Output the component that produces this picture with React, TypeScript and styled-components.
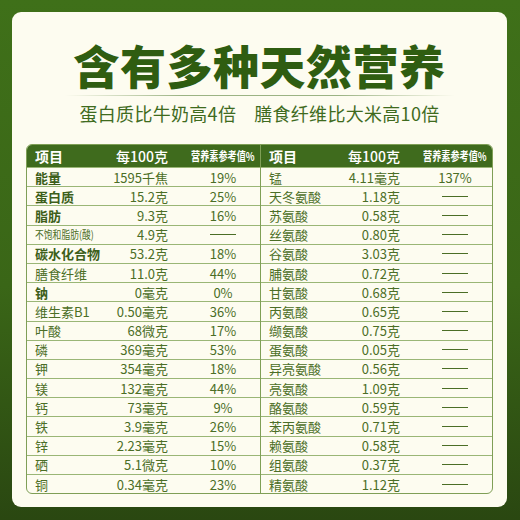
import styled, { createGlobalStyle } from "styled-components";

const GlobalStyle = createGlobalStyle`
  html, body {
    margin: 0;
    padding: 0;
  }
  body {
    font-family: "Noto Sans CJK SC", "Noto Sans", sans-serif;
  }
`;

const Page = styled.div`
  width: 520px;
  height: 520px;
  box-sizing: border-box;
  padding: 12px 13px 13px 12px;
  background: linear-gradient(to bottom, #3f7019 0%, #3a6617 55%, #2a4711 100%);
`;

const Card = styled.div`
  height: 100%;
  box-sizing: border-box;
  background: #fdfcf0;
  border-radius: 9px;
  padding: 27px 14px 0 14px;
  display: flex;
  flex-direction: column;
  align-items: center;
`;

const Title = styled.h1`
  margin: 0;
  font-size: 46px;
  line-height: 50px;
  font-weight: 900;
  color: #2f5d11;
  letter-spacing: 0.5px;
`;

const Rule = styled.div`
  width: 390px;
  height: 1px;
  margin-top: 6px;
  background: linear-gradient(
    to right,
    rgba(90, 130, 60, 0),
    rgba(90, 130, 60, 0.6) 30%,
    rgba(90, 130, 60, 0.6) 70%,
    rgba(90, 130, 60, 0)
  );
`;

const Subtitle = styled.p`
  margin: 6px 0 0 0;
  font-size: 18px;
  line-height: 22px;
  color: #3f6b1e;
  display: flex;
  gap: 18px;
  letter-spacing: 0.3px;
`;

const Table = styled.div`
  margin-top: 20px;
  align-self: stretch;
  display: grid;
  grid-template-columns: 234px 1fr;
  border: 1px solid #7f9f56;
  border-radius: 6px;
  overflow: hidden;
`;

const Half = styled.div<{ $divider?: boolean }>`
  display: flex;
  flex-direction: column;
  border-right: ${(p) => (p.$divider ? "1px solid #7f9f56" : "none")};
`;

const Row = styled.div<{ $head?: boolean }>`
  display: grid;
  grid-template-columns: minmax(0, 1fr) 70px 74px;
  column-gap: 18px;
  align-items: center;
  height: ${(p) => (p.$head ? "22px" : "19.2px")};
  box-sizing: border-box;
  padding-left: 8px;
  background: ${(p) => (p.$head ? "#3f6b1d" : "transparent")};
  color: ${(p) => (p.$head ? "#ffffff" : "#4b6e26")};
  font-size: 13px;
  line-height: 1;
  white-space: nowrap;
  & + & {
    border-top: 1px solid #9ab676;
  }
`;

const Label = styled.span<{ $bold?: boolean; $small?: boolean }>`
  font-weight: ${(p) => (p.$bold ? 700 : 400)};
  color: ${(p) => (p.$bold ? "#3d5f1a" : "inherit")};
  font-size: ${(p) => (p.$small ? "11px" : "13px")};
  transform: ${(p) => (p.$small ? "scaleX(0.8)" : "none")};
  transform-origin: left center;
`;

const HeadLabel = styled.span`
  font-weight: 700;
  font-size: 14px;
`;

const Amount = styled.span<{ $head?: boolean }>`
  text-align: right;
  font-size: ${(p) => (p.$head ? "14px" : "13px")};
  font-weight: ${(p) => (p.$head ? 500 : 400)};
`;

const Pct = styled.span`
  text-align: center;
`;

const HeadPct = styled.span`
  justify-self: center;
  font-size: 12px;
  font-weight: 700;
  transform: scaleX(0.76);
`;

const Dash = styled.span`
  justify-self: center;
  width: 26px;
  height: 1px;
  background: #4b6e26;
`;

type Item = { name: string; amount: string; pct?: string; bold?: boolean; small?: boolean };

const left: Item[] = [
  { name: "能量", amount: "1595千焦", pct: "19%", bold: true },
  { name: "蛋白质", amount: "15.2克", pct: "25%", bold: true },
  { name: "脂肪", amount: "9.3克", pct: "16%", bold: true },
  { name: "不饱和脂肪(酸)", amount: "4.9克", small: true },
  { name: "碳水化合物", amount: "53.2克", pct: "18%", bold: true },
  { name: "膳食纤维", amount: "11.0克", pct: "44%" },
  { name: "钠", amount: "0毫克", pct: "0%", bold: true },
  { name: "维生素B1", amount: "0.50毫克", pct: "36%" },
  { name: "叶酸", amount: "68微克", pct: "17%" },
  { name: "磷", amount: "369毫克", pct: "53%" },
  { name: "钾", amount: "354毫克", pct: "18%" },
  { name: "镁", amount: "132毫克", pct: "44%" },
  { name: "钙", amount: "73毫克", pct: "9%" },
  { name: "铁", amount: "3.9毫克", pct: "26%" },
  { name: "锌", amount: "2.23毫克", pct: "15%" },
  { name: "硒", amount: "5.1微克", pct: "10%" },
  { name: "铜", amount: "0.34毫克", pct: "23%" },
];

const right: Item[] = [
  { name: "锰", amount: "4.11毫克", pct: "137%" },
  { name: "天冬氨酸", amount: "1.18克" },
  { name: "苏氨酸", amount: "0.58克" },
  { name: "丝氨酸", amount: "0.80克" },
  { name: "谷氨酸", amount: "3.03克" },
  { name: "脯氨酸", amount: "0.72克" },
  { name: "甘氨酸", amount: "0.68克" },
  { name: "丙氨酸", amount: "0.65克" },
  { name: "缬氨酸", amount: "0.75克" },
  { name: "蛋氨酸", amount: "0.05克" },
  { name: "异亮氨酸", amount: "0.56克" },
  { name: "亮氨酸", amount: "1.09克" },
  { name: "酪氨酸", amount: "0.59克" },
  { name: "苯丙氨酸", amount: "0.71克" },
  { name: "赖氨酸", amount: "0.58克" },
  { name: "组氨酸", amount: "0.37克" },
  { name: "精氨酸", amount: "1.12克" },
];

function Column({ items, divider }: { items: Item[]; divider?: boolean }) {
  return (
    <Half $divider={divider}>
      <Row $head>
        <HeadLabel>项目</HeadLabel>
        <Amount $head>每100克</Amount>
        <HeadPct>营养素参考值%</HeadPct>
      </Row>
      {items.map((it) => (
        <Row key={it.name}>
          <Label $bold={it.bold} $small={it.small}>
            {it.name}
          </Label>
          <Amount>{it.amount}</Amount>
          {it.pct ? <Pct>{it.pct}</Pct> : <Dash />}
        </Row>
      ))}
    </Half>
  );
}

export default function App() {
  return (
    <>
      <GlobalStyle />
      <Page>
        <Card>
          <Title>含有多种天然营养</Title>
          <Rule />
          <Subtitle>
            <span>蛋白质比牛奶高4倍</span>
            <span>膳食纤维比大米高10倍</span>
          </Subtitle>
          <Table>
            <Column items={left} divider />
            <Column items={right} />
          </Table>
        </Card>
      </Page>
    </>
  );
}
